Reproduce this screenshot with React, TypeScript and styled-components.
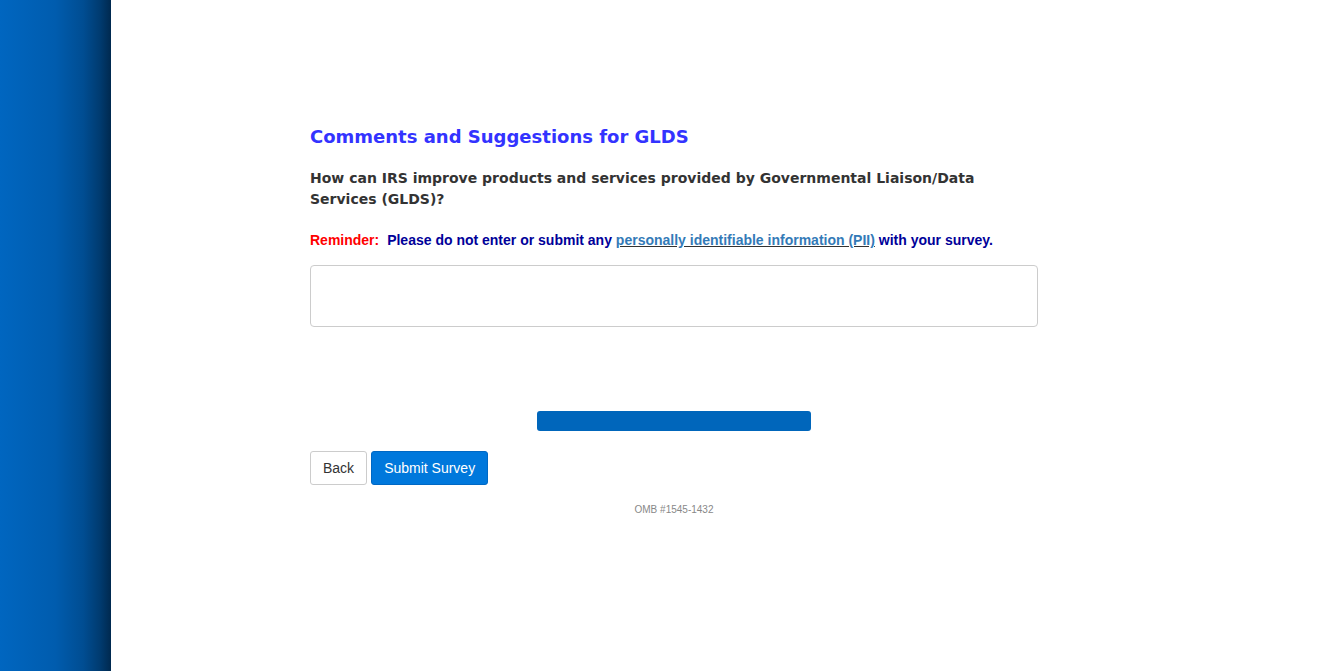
import { createGlobalStyle, styled } from "styled-components";

const GlobalStyle = createGlobalStyle`
  html, body {
    margin: 0;
    padding: 0;
    background: #fff;
  }
  body {
    font-family: "Liberation Sans", Arial, sans-serif;
  }
`;

const Page = styled.div`
  display: flex;
  min-height: 100vh;
`;

const Sidebar = styled.div`
  width: 111px;
  flex-shrink: 0;
  background: linear-gradient(
    to right,
    #0066c0 0%,
    #005cae 50%,
    #004d92 75%,
    #003b70 90%,
    #00294f 100%
  );
`;

const Main = styled.main`
  flex: 1;
  padding: 126px 0 0 199px;
`;

const Column = styled.div`
  width: 728px;
  display: flex;
  flex-direction: column;
`;

const Title = styled.h2`
  margin: 0;
  font-family: "DejaVu Sans", Verdana, sans-serif;
  font-size: 18px;
  font-weight: bold;
  line-height: 22px;
  color: #3333ff;
`;

const Question = styled.p`
  margin: 20px 0 0;
  font-family: "DejaVu Sans", Verdana, sans-serif;
  font-size: 14px;
  font-weight: bold;
  line-height: 21px;
  color: #333;
  width: 700px;
`;

const Reminder = styled.p`
  margin: 21px 0 0;
  font-size: 14px;
  font-weight: bold;
  line-height: 18px;
  color: #000099;
`;

const Red = styled.span`
  color: #ff0000;
  margin-right: 4px;
`;

const Link = styled.a`
  color: #337ab7;
  text-decoration: underline;
  text-decoration-color: #333;
`;

const Comments = styled.textarea`
  margin-top: 16px;
  box-sizing: border-box;
  width: 728px;
  height: 62px;
  border: 1px solid #ccc;
  border-radius: 4px;
  resize: none;
  padding: 6px 12px;
  font-family: "Liberation Sans", Arial, sans-serif;
  font-size: 14px;
`;

const ProgressWrap = styled.div`
  margin-top: 84px;
  display: flex;
  justify-content: center;
`;

const Progress = styled.div`
  width: 274px;
  height: 20px;
  background: #0066bb;
  border-radius: 3px;
`;

const Buttons = styled.div`
  margin-top: 20px;
  display: flex;
  gap: 4px;
`;

const Button = styled.button<{ $primary?: boolean }>`
  height: 34px;
  padding: 0 12px;
  border-radius: 3px;
  font-family: "Liberation Sans", Arial, sans-serif;
  font-size: 14px;
  cursor: pointer;
  border: 1px solid ${(p) => (p.$primary ? "#0068c4" : "#ccc")};
  background: ${(p) => (p.$primary ? "#0078dc" : "#fff")};
  color: ${(p) => (p.$primary ? "#fff" : "#333")};
`;

const Omb = styled.div`
  margin-top: 19px;
  text-align: center;
  font-size: 10px;
  color: #888;
`;

export default function App() {
  return (
    <>
      <GlobalStyle />
      <Page>
        <Sidebar />
        <Main>
          <Column>
            <Title>Comments and Suggestions for GLDS</Title>
            <Question>
              How can IRS improve products and services provided by Governmental Liaison/Data
              Services (GLDS)?
            </Question>
            <Reminder>
              <Red>Reminder: </Red> Please do not enter or submit any{" "}
              <Link href="#">personally identifiable information (PII)</Link> with your survey.
            </Reminder>
            <Comments aria-label="Comments" />
            <ProgressWrap>
              <Progress />
            </ProgressWrap>
            <Buttons>
              <Button>Back</Button>
              <Button $primary>Submit Survey</Button>
            </Buttons>
            <Omb>OMB #1545-1432</Omb>
          </Column>
        </Main>
      </Page>
    </>
  );
}
